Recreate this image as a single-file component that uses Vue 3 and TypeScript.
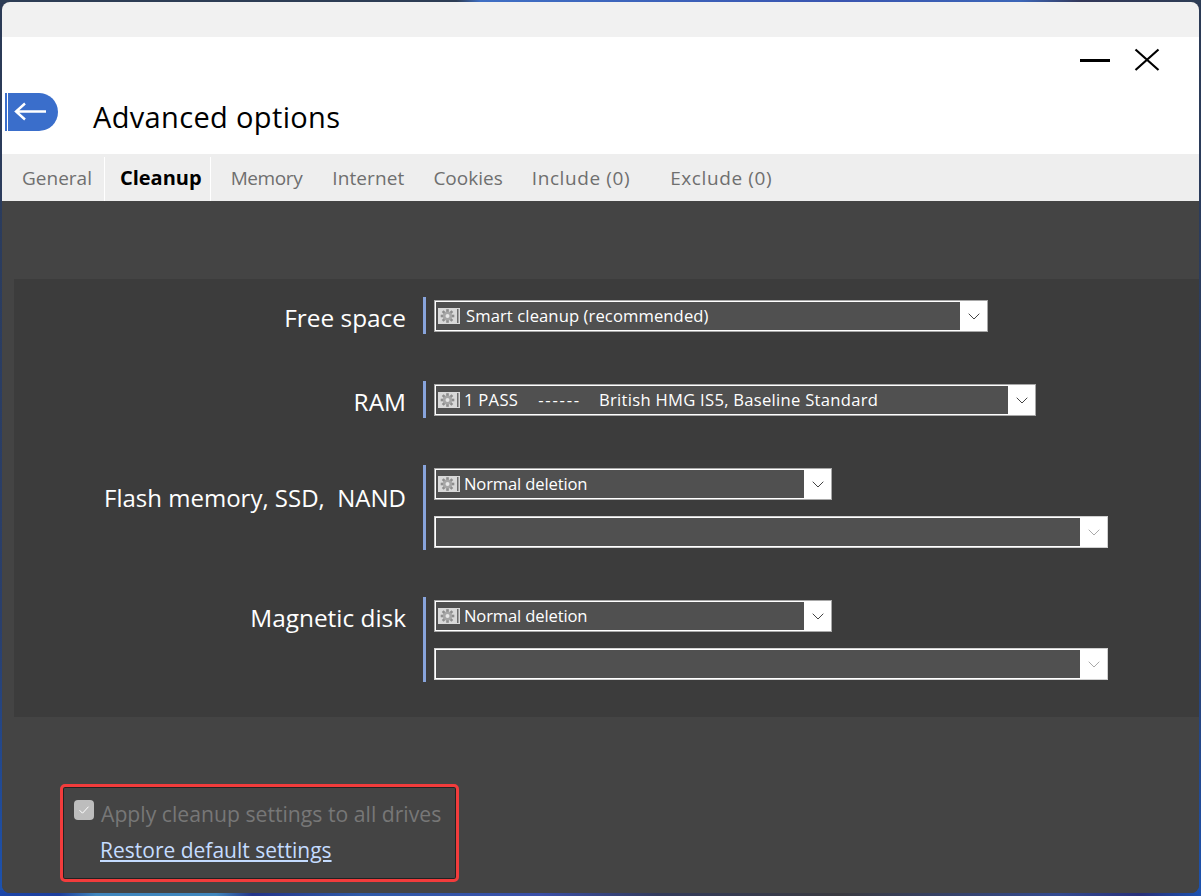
<script setup lang="ts">
const tabs = ['General', 'Cleanup', 'Memory', 'Internet', 'Cookies', 'Include (0)', 'Exclude (0)']

interface Combo {
  parts: string[]
  width: number
  kind: string
  disabled?: boolean
  icon?: boolean
  textGap?: number
}
interface Row {
  label: string
  tall?: boolean
  combos: Combo[]
}

const rows: Row[] = [
  { label: 'Free space', combos: [{ parts: ['Smart cleanup (recommended)'], kind: 'smart', width: 554, icon: true, textGap: 6 }] },
  { label: 'RAM', combos: [{ parts: ['1 PASS', '------', 'British HMG IS5, Baseline Standard'], kind: 'ram', width: 602, icon: true }] },
  {
    label: 'Flash memory, SSD,  NAND',
    tall: true,
    combos: [
      { parts: ['Normal deletion'], kind: 'normal', width: 398, icon: true },
      { parts: [], kind: 'empty', width: 674, disabled: true },
    ],
  },
  {
    label: 'Magnetic disk',
    combos: [
      { parts: ['Normal deletion'], kind: 'normal', width: 398, icon: true },
      { parts: [], kind: 'empty', width: 674, disabled: true },
    ],
  },
]

const teeth = [0, 45, 90, 135, 180, 225, 270, 315]
</script>

<template>
  <div class="desktop">
    <div class="window">
      <div class="caption"></div>
      <header class="head">
        <div class="controls">
          <svg width="32" height="24" viewBox="0 0 32 24">
            <path d="M1 13.5h30" stroke="#000" stroke-width="3" />
          </svg>
          <svg width="26" height="24" viewBox="0 0 26 24">
            <path d="M1.5 2.5l23 20.5M24.5 2.5l-23 20.5" stroke="#000" stroke-width="2.2" fill="none" />
          </svg>
        </div>
        <div class="title-row">
          <div class="back">
            <svg width="34" height="20" viewBox="0 0 34 20">
              <path d="M33 9.5H3M12 1.5l-9 8 9 8" stroke="#fff" stroke-width="2.4" fill="none" />
            </svg>
          </div>
          <h1>Advanced options</h1>
        </div>
      </header>

      <nav class="tabs">
        <span v-for="t in tabs" :key="t" class="tab" :class="[{ active: t === 'Cleanup' }, 'tab-' + t.split(' ')[0]]">{{ t }}</span>
      </nav>

      <main class="body">
        <section class="panel">
          <div v-for="r in rows" :key="r.label" class="row">
            <div class="label" :class="{ tall: r.tall }">{{ r.label }}</div>
            <div class="fields">
              <div
                v-for="(c, i) in r.combos"
                :key="i"
                class="combo"
                :class="[c.kind, { disabled: c.disabled }]"
                :style="{ width: c.width + 'px' }"
              >
                <div class="value">
                  <svg v-if="c.icon" width="22" height="16" viewBox="0 0 22 16" class="gear">
                    <rect x="0" y="0" width="22" height="16" fill="#d9d9d9" />
                    <rect x="19" y="1" width="1.5" height="14" fill="#6c6c6c" />
                    <g fill="#8d8d8d">
                      <rect v-for="a in teeth" :key="a" x="8.2" y="1.2" width="2.6" height="3.2" :transform="`rotate(${a} 9.5 8)`" />
                    </g>
                    <circle cx="9.5" cy="8" r="4.6" fill="#a6a6a6" />
                    <circle cx="9.5" cy="8" r="2" fill="#e6e6e6" />
                  </svg>
                  <span v-if="c.parts.length" class="txt" :style="{ marginLeft: (c.textGap ?? 4) + 'px' }">
                    <span v-for="p in c.parts" :key="p" :class="{ dashes: p === '------' }">{{ p }}</span>
                  </span>
                </div>
                <div class="arrow">
                  <svg width="12" height="7" viewBox="0 0 12 7">
                    <path d="M.7.7L6 6l5.3-5.3" fill="none" stroke="currentColor" stroke-width="1" />
                  </svg>
                </div>
              </div>
            </div>
          </div>
        </section>

        <div class="notice">
          <label class="check">
            <span class="box">
              <svg width="12" height="10" viewBox="0 0 12 10">
                <path d="M1.5 5.2l3 3 6-6.5" fill="none" stroke="#fff" stroke-width="1" />
              </svg>
            </span>
            <span>Apply cleanup settings to all drives</span>
          </label>
          <a class="restore">Restore default settings</a>
        </div>
      </main>
    </div>
  </div>
</template>

<style scoped>
.desktop {
  width: 1201px;
  height: 896px;
  padding: 2px;
  box-sizing: border-box;
  background:
    linear-gradient(90deg, #2d3d55 0%, #2d3d55 38%, #3f6fc4 40%, #3a55b0 70%, #3c66b8 85%, #33385a 90%, #2d3d55 100%) 0 0 / 100% 3px no-repeat,
    linear-gradient(90deg, #1c45a8 0%, #1d3f9c 5%, #3f86bd 8%, #3f86bd 18%, #23348a 21%, #2f5aa8 30%, #3a4fa8 45%, #333a5a 55%, #3a3a40 70%, #334a90 88%, #28307a 95%, #1c52b0 100%) 0 100% / 100% 6px no-repeat,
    linear-gradient(180deg, #2b3a55 0%, #2a3f6c 70%, #1c52b0 100%);
  font-family: "Open Sans", "Noto Sans", sans-serif;
  overflow: hidden;
}
.window {
  width: 1197px;
  height: 891px;
  border-radius: 8px;
  overflow: hidden;
  background: #444;
  display: flex;
  flex-direction: column;
}
.caption {
  height: 35px;
  background: #f1f1f1;
}
.head {
  height: 117px;
  background: #fff;
  position: relative;
}
.controls {
  position: absolute;
  top: 10px;
  right: 39px;
  display: flex;
  gap: 23px;
}
.title-row {
  display: flex;
  align-items: flex-start;
  padding: 56px 0 0 3px;
}
.back {
  width: 53px;
  height: 38px;
  box-sizing: border-box;
  background: #3a6ecb;
  border-left: 2px solid #3a6ecb;
  border-radius: 0 19px 19px 0;
  display: flex;
  align-items: center;
  padding-left: 6px;
  box-shadow: inset 1px 0 0 #fff;
}
h1 {
  margin: 5px 0 0 35px;
  font-size: 29px;
  font-weight: 400;
  color: #000;
  line-height: 38px;
  letter-spacing: 0.35px;
}
.tabs {
  height: 47px;
  background: #eee;
  display: flex;
  align-items: stretch;
  font-size: 19px;
  color: #6f6f6f;
  padding-left: 20px;
  box-sizing: border-box;
}
.tab {
  line-height: 48px;
  margin-right: 29px;
  white-space: nowrap;
}
.tab.active {
  margin: 3px 20px 0 -17px;
  padding: 0 8px 0 15px;
  line-height: 42px;
  font-size: 20px;
  font-weight: 700;
  color: #000;
  border-left: 1px solid #fff;
  border-right: 1px solid #fff;
}
.tab-Memory {
  letter-spacing: -0.4px;
  margin-right: 30px;
}
.tab-Internet {
  letter-spacing: 0.1px;
}
.tab-Include,
.tab-Exclude {
  letter-spacing: 0.6px;
}
.tab-Include {
  margin-right: 40px;
}
.body {
  flex: 1;
  background: #444;
  padding-top: 78px;
}
.panel {
  margin-left: 12px;
  background: #3c3c3c;
  padding: 18px 0 35px;
  display: flex;
  flex-direction: column;
  gap: 47px;
}
.row {
  display: flex;
  align-items: stretch;
}
.label {
  width: 392px;
  text-align: right;
  font-size: 24.4px;
  line-height: 42px;
  height: 36px;
  color: #fff;
  white-space: pre;
}
.label.tall {
  padding-top: 12px;
  font-size: 24px;
}
.fields {
  margin-left: 17px;
  border-left: 3px solid #88a4dc;
  padding: 3px 0 2px 8px;
  display: flex;
  flex-direction: column;
  gap: 16px;
}
.combo {
  height: 32px;
  box-sizing: border-box;
  border: 1px solid #a8a8a8;
  background: #fff;
  display: flex;
}
.value {
  flex: 1;
  background: #505050;
  margin: 1px 0 1px 1px;
  display: flex;
  align-items: center;
  padding-left: 2px;
  color: #fff;
  font-size: 16.6px;
  white-space: nowrap;
  min-width: 0;
}
.txt {
  margin-bottom: 2px;
}
.smart .txt {
  letter-spacing: 0.1px;
}
.normal .txt {
  letter-spacing: -0.15px;
}
.ram .txt {
  letter-spacing: 0.28px;
}
.ram .txt .dashes {
  margin: 0 18px 0 20px;
  letter-spacing: 1.8px;
}
.gear {
  flex: none;
}
.arrow {
  width: 27px;
  display: flex;
  align-items: center;
  justify-content: center;
  color: #444;
}
.combo.disabled {
  border-color: #d0d0d0;
}
.combo.disabled .arrow {
  color: #aaa;
}
.notice {
  margin: 67px 0 0 58px;
  width: 399px;
  height: 98px;
  box-sizing: border-box;
  border: 3px solid #f23c3c;
  border-radius: 5px;
  padding: 12px 0 0 11px;
  box-shadow: inset 0 0 0 1px #222;
}
.check {
  display: flex;
  align-items: center;
  gap: 7px;
  font-size: 21.2px;
  line-height: 30px;
  color: #777;
  white-space: nowrap;
}
.box {
  width: 20px;
  height: 20px;
  border-radius: 4px;
  background: #bdbdbd;
  display: flex;
  align-items: center;
  justify-content: center;
  margin-top: -8px;
}
.restore {
  display: inline-block;
  margin: 8px 0 0 26px;
  font-size: 21px;
  line-height: 26px;
  color: #c5dcff;
  text-decoration: underline;
  white-space: nowrap;
}
</style>
